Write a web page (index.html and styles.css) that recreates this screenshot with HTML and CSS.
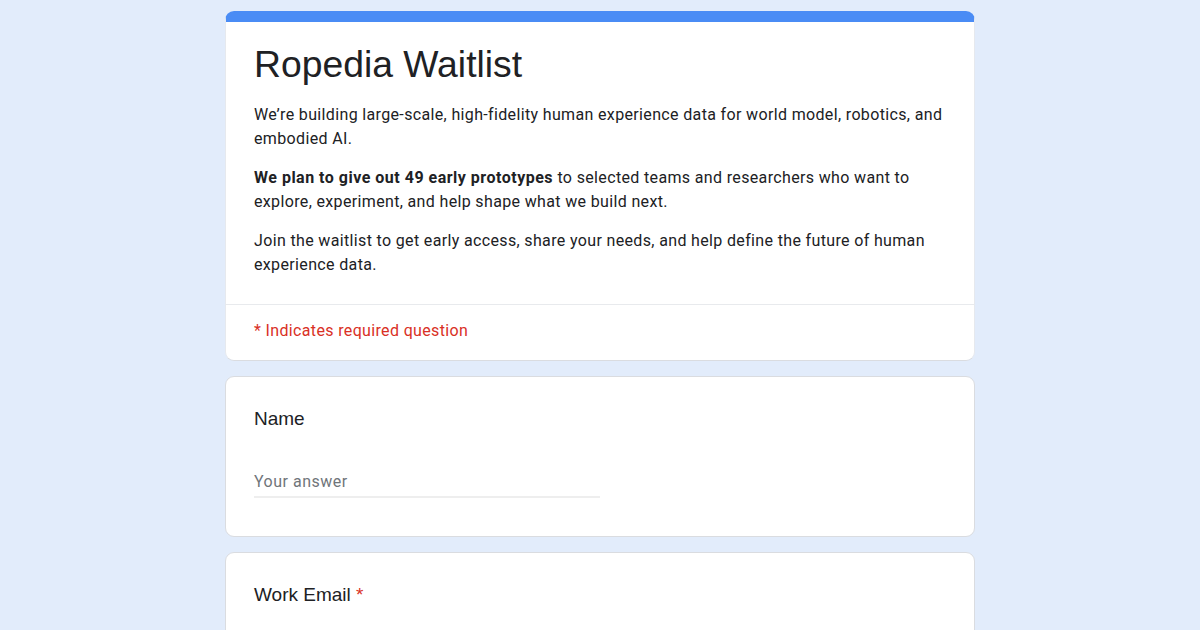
FILE: index.html
```html
<!DOCTYPE html>
<html lang="en">
<head>
<meta charset="utf-8">
<title>Ropedia Waitlist</title>
<link rel="stylesheet" href="styles.css">
</head>
<body>
<main class="form">
  <section class="card header-card">
    <div class="header-body">
      <h1 class="title">Ropedia Waitlist</h1>
      <p class="desc">We’re building large-scale, high-fidelity human experience data for world model, robotics, and embodied AI.</p>
      <p class="desc"><strong>We plan to give out 49 early prototypes</strong> to selected teams and researchers who want to explore, experiment, and help shape what we build next.</p>
      <p class="desc">Join the waitlist to get early access, share your needs, and help define the future of human experience data.</p>
    </div>
    <div class="required-note">* Indicates required question</div>
  </section>

  <section class="card question">
    <div class="q-label">Name</div>
    <div class="answer">Your answer</div>
  </section>

  <section class="card question">
    <div class="q-label">Work Email <span class="star">*</span></div>
    <div class="answer">Your answer</div>
  </section>
</main>
</body>
</html>
```

FILE: styles.css
```css
* { box-sizing: border-box; }
html, body { margin: 0; padding: 0; }
body {
  background: #e2ecfb;
  font-family: Roboto, "Noto Sans", Arial, sans-serif;
  color: #202124;
}
.form {
  width: 750px;
  margin: 11px auto 0;
  display: flex;
  flex-direction: column;
  gap: 15px;
}
.card {
  background: #ffffff;
  border: 1px solid #dadce0;
  border-radius: 9px;
}
.header-card {
  border-top: 11px solid #4a8cf5;
  border-left-color: #e6e9ee;
  border-right-color: #e6e9ee;
}
.header-body {
  padding: 16px 28px 27px;
  border-bottom: 1px solid #e8eaed;
}
.title {
  margin: 0 0 13px;
  font-family: "Liberation Sans", Arial, sans-serif;
  font-weight: 400;
  font-size: 37.3px;
  line-height: 52px;
  color: #202124;
}
.desc {
  margin: 0 0 15px;
  font-size: 16px;
  line-height: 24px;
  letter-spacing: 0.35px;
  color: #202124;
}
.desc:last-child { margin-bottom: 0; }
.desc strong { font-weight: 700; letter-spacing: 0.5px; }
.required-note {
  padding: 14px 28px 17px;
  font-size: 16px;
  line-height: 24px;
  color: #d93025;
  letter-spacing: 0.35px;
}
.question {
  padding: 28px 28px 38px;
}
.q-label {
  font-family: "Liberation Sans", Arial, sans-serif;
  font-size: 19px;
  line-height: 28px;
  color: #202124;
}
.star { color: #d93025; }
.answer {
  margin-top: 37px;
  width: 346px;
  font-size: 16px;
  line-height: 24px;
  color: #70757a;
  padding-bottom: 2px;
  border-bottom: 2px solid #eeeeee;
  letter-spacing: 0.5px;
}
```
